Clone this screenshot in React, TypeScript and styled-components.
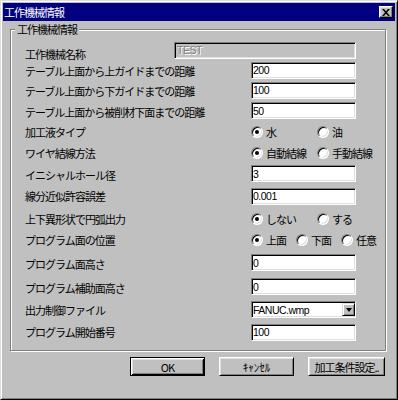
import React from "react";
import styled, { createGlobalStyle } from "styled-components";

const GlobalStyle = createGlobalStyle`
  html, body { margin: 0; padding: 0; background: #c0c0c0; }
  body { font-family: "Noto Sans CJK JP", "Noto Sans", sans-serif; color: #000; }
`;

const Window = styled.div`
  width: 398px;
  height: 400px;
  box-sizing: border-box;
  background: #c0c0c0;
  border: 1px solid;
  border-color: #dfdfdf #000 #000 #dfdfdf;
  box-shadow: inset 1px 1px #fff, inset -1px -1px #808080;
  padding: 2px;
  display: flex;
  flex-direction: column;
`;

const TitleBar = styled.div`
  height: 18px;
  flex: none;
  background: #000080;
  color: #fff;
  display: flex;
  align-items: center;
  justify-content: space-between;
  padding: 0 2px 0 1px;
  font-size: 11px;
  letter-spacing: -1px;
`;

const TitleText = styled.span`
  line-height: 18px;
`;

const CloseButton = styled.div`
  width: 14px;
  height: 12px;
  box-sizing: border-box;
  background: #c0c0c0;
  border: 1px solid;
  border-color: #fff #000 #000 #fff;
  box-shadow: inset -1px -1px #808080, inset 1px 1px #dfdfdf;
  display: flex;
  align-items: center;
  justify-content: center;
`;

const Body = styled.div`
  flex: 1;
  padding: 8px 8px 0 7px;
  display: flex;
  flex-direction: column;
`;

const Group = styled.div`
  position: relative;
  width: 376px;
  height: 322px;
  box-sizing: border-box;
  border: 1px solid #808080;
  box-shadow: inset 1px 1px #fff, 1px 1px #fff;
  padding: 10px 0 0 14px;
  display: flex;
  flex-direction: column;
`;

const Legend = styled.span`
  position: absolute;
  top: -8px;
  left: 4px;
  padding: 0 2px;
  background: #c0c0c0;
  line-height: 14px;
  font-size: 11px;
  letter-spacing: -1px;
  white-space: nowrap;
`;

const Row = styled.div<{ $h: number }>`
  height: ${(p) => p.$h}px;
  display: flex;
  align-items: center;
  flex: none;
`;

const Label = styled.span<{ $w?: number; $dy?: number }>`
  flex: 0 0 ${(p) => p.$w ?? 226}px;
  font-size: 11px;
  letter-spacing: -1px;
  white-space: nowrap;
  padding-top: ${(p) => (p.$dy ?? 1) * 2}px;
`;

const Field = styled.div<{ $w?: number; $disabled?: boolean }>`
  width: ${(p) => p.$w ?? 105}px;
  height: 17px;
  box-sizing: border-box;
  border: 1px solid;
  border-color: #808080 #fff #fff #808080;
  box-shadow: inset 1px 1px #000, inset -1px -1px #dfdfdf;
  background: ${(p) => (p.$disabled ? "#c0c0c0" : "#fff")};
  color: ${(p) => (p.$disabled ? "#808080" : "#000")};
  text-shadow: ${(p) => (p.$disabled ? "1px 1px #fff" : "none")};
  padding: 0 0 0 ${(p) => (p.$disabled ? 2 : 1)}px;
  display: flex;
  align-items: center;
  font-family: "Liberation Sans", Arial, sans-serif;
  font-size: 10.5px;
  letter-spacing: -0.5px;
  white-space: nowrap;
  overflow: hidden;
`;

const FieldText = styled.span`
  flex: 1;
`;

const DropButton = styled.div`
  width: 13px;
  height: 13px;
  flex: none;
  box-sizing: border-box;
  background: #c0c0c0;
  border: 1px solid;
  border-color: #dfdfdf #000 #000 #dfdfdf;
  box-shadow: inset 1px 1px #fff, inset -1px -1px #808080;
  display: flex;
  align-items: center;
  justify-content: center;
  &::after {
    content: "";
    width: 0;
    height: 0;
    border-left: 3.5px solid transparent;
    border-right: 3.5px solid transparent;
    border-top: 4px solid #000;
  }
`;

const RadioGroup = styled.div<{ $n: number; $col: number }>`
  display: grid;
  grid-template-columns: repeat(${(p) => p.$n}, ${(p) => p.$col}px);
`;

const RadioOption = styled.label`
  display: flex;
  align-items: center;
  gap: 3px;
  font-size: 11px;
  letter-spacing: -1px;
  white-space: nowrap;
`;

const RadioCircle = styled.span<{ $checked?: boolean }>`
  width: 12px;
  height: 12px;
  flex: none;
  box-sizing: border-box;
  border-radius: 50%;
  border: 1px solid;
  border-color: #808080 #fff #fff #808080;
  box-shadow: inset 1px 1px #000, inset -1px -1px #dfdfdf;
  background: #fff;
  display: flex;
  align-items: center;
  justify-content: center;
  &::after {
    content: "";
    display: ${(p) => (p.$checked ? "block" : "none")};
    width: 4px;
    height: 4px;
    border-radius: 50%;
    background: #000;
  }
`;

const ButtonRow = styled.div`
  display: flex;
  justify-content: flex-end;
  gap: 14px;
  margin: 6px 2px 0 0;
`;

const Button = styled.div<{ $w: number; $default?: boolean; $half?: boolean }>`
  width: ${(p) => p.$w}px;
  height: 19px;
  box-sizing: border-box;
  background: #c0c0c0;
  border: 1px solid;
  border-color: ${(p) => (p.$default ? "#000" : "#fff #000 #000 #fff")};
  box-shadow: ${(p) =>
    p.$default
      ? "inset 1px 1px #fff, inset -1px -1px #000, inset 2px 2px #dfdfdf, inset -2px -2px #808080"
      : "inset 1px 1px #dfdfdf, inset -1px -1px #808080"};
  display: flex;
  align-items: center;
  justify-content: center;
  font-size: 11px;
  letter-spacing: ${(p) => (p.$half ? "0" : "-1px")};
  white-space: nowrap;
`;

type Opt = { text: string; checked?: boolean };

const Radios: React.FC<{ options: Opt[]; col: number }> = ({ options, col }) => (
  <RadioGroup $n={options.length} $col={col}>
    {options.map((o) => (
      <RadioOption key={o.text}>
        <RadioCircle $checked={o.checked} />
        {o.text}
      </RadioOption>
    ))}
  </RadioGroup>
);

export default function App() {
  return (
    <>
      <GlobalStyle />
      <Window>
        <TitleBar>
          <TitleText>工作機械情報</TitleText>
          <CloseButton>
            <svg width="8" height="7" viewBox="0 0 8 7">
              <path d="M0 0h2l2 2.2L6 0h2L5 3.5 8 7H6L4 4.8 2 7H0l3-3.5z" fill="#000" />
            </svg>
          </CloseButton>
        </TitleBar>
        <Body>
          <Group>
            <Legend>工作機械情報</Legend>
            <Row $h={20}>
              <Label $w={149} $dy={4}>工作機械名称</Label>
              <Field $w={182} $disabled>
                <FieldText>TEST</FieldText>
              </Field>
            </Row>
            <Row $h={20}>
              <Label>テーブル上面から上ガイドまでの距離</Label>
              <Field><FieldText>200</FieldText></Field>
            </Row>
            <Row $h={20}>
              <Label>テーブル上面から下ガイドまでの距離</Label>
              <Field><FieldText>100</FieldText></Field>
            </Row>
            <Row $h={21}>
              <Label>テーブル上面から被削材下面までの距離</Label>
              <Field><FieldText>50</FieldText></Field>
            </Row>
            <Row $h={22}>
              <Label $dy={0}>加工液タイプ</Label>
              <Radios col={66} options={[{ text: "水", checked: true }, { text: "油" }]} />
            </Row>
            <Row $h={20}>
              <Label $dy={0}>ワイヤ結線方法</Label>
              <Radios col={66} options={[{ text: "自動結線", checked: true }, { text: "手動結線" }]} />
            </Row>
            <Row $h={21}>
              <Label>イニシャルホール径</Label>
              <Field><FieldText>3</FieldText></Field>
            </Row>
            <Row $h={24}>
              <Label $dy={0}>線分近似許容誤差</Label>
              <Field><FieldText>0.001</FieldText></Field>
            </Row>
            <Row $h={22}>
              <Label $dy={0}>上下異形状で円弧出力</Label>
              <Radios col={66} options={[{ text: "しない", checked: true }, { text: "する" }]} />
            </Row>
            <Row $h={20}>
              <Label $dy={0}>プログラム面の位置</Label>
              <Radios
                col={45}
                options={[{ text: "上面", checked: true }, { text: "下面" }, { text: "任意" }]}
              />
            </Row>
            <Row $h={25}>
              <Label>プログラム面高さ</Label>
              <Field><FieldText>0</FieldText></Field>
            </Row>
            <Row $h={23}>
              <Label>プログラム補助面高さ</Label>
              <Field><FieldText>0</FieldText></Field>
            </Row>
            <Row $h={23}>
              <Label $dy={0}>出力制御ファイル</Label>
              <Field>
                <FieldText>FANUC.wmp</FieldText>
                <DropButton />
              </Field>
            </Row>
            <Row $h={22}>
              <Label $dy={-1}>プログラム開始番号</Label>
              <Field><FieldText>100</FieldText></Field>
            </Row>
          </Group>
          <ButtonRow>
            <Button $w={75} $default>OK</Button>
            <Button $w={75} $half>ｷｬﾝｾﾙ</Button>
            <Button $w={77}>加工条件設定..</Button>
          </ButtonRow>
        </Body>
      </Window>
    </>
  );
}
